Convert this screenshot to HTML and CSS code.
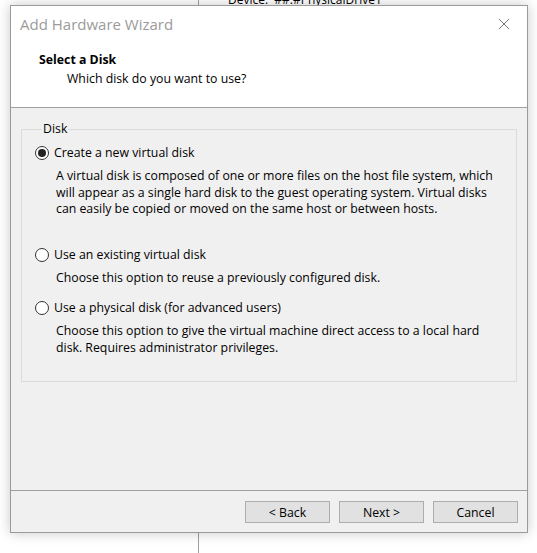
FILE: index.html
```html
<!DOCTYPE html>
<html lang="en">
<head>
    <meta charset="UTF-8">
    <title>Add Hardware Wizard</title>
    <link rel="stylesheet" href="styles.css">
</head>
<body>
    <div id="desktop">
        <div class="behind">
            <div class="behind-rule"></div>
            <div class="behind-text">Device:&nbsp; ##.#PhysicalDrive1</div>
        </div>

        <div id="wizard">
            <div class="titlebar">
                <span class="title">Add Hardware Wizard</span>
                <svg class="close" width="12" height="12" viewBox="0 0 12 12">
                    <path d="M1,1 L11,11 M11,1 L1,11" stroke="#777" stroke-width="1" fill="none" />
                </svg>
            </div>

            <div class="header">
                <div class="header-title">Select a Disk</div>
                <div class="header-sub">Which disk do you want to use?</div>
            </div>

            <div class="content">
                <fieldset class="group">
                    <legend>Disk</legend>

                    <div class="option first">
                        <div class="option-label">
                            <span class="radio checked"></span>
                            Create a new virtual disk
                        </div>
                        <p class="option-desc">A virtual disk is composed of one or more files on the host file system, which will appear as a single hard disk to the guest operating system. Virtual disks can easily be copied or moved on the same host or between hosts.</p>
                    </div>

                    <div class="option second">
                        <div class="option-label">
                            <span class="radio"></span>
                            Use an existing virtual disk
                        </div>
                        <p class="option-desc">Choose this option to reuse a previously configured disk.</p>
                    </div>

                    <div class="option third">
                        <div class="option-label">
                            <span class="radio"></span>
                            Use a physical disk (for advanced users)
                        </div>
                        <p class="option-desc">Choose this option to give the virtual machine direct access to a local hard disk. Requires administrator privileges.</p>
                    </div>
                </fieldset>
            </div>

            <div class="footer">
                <button class="btn">&lt; Back</button>
                <button class="btn">Next &gt;</button>
                <button class="btn">Cancel</button>
            </div>
        </div>
    </div>
</body>
</html>
```

FILE: styles.css
```css
body {
    margin: 0;
    background-color: #fff;
    font-family: "Segoe UI", "Open Sans", "Liberation Sans", Arial, sans-serif;
    font-size: 12.3px;
    color: #000;
}
#desktop {
    position: relative;
    width: 537px;
    height: 553px;
    overflow: hidden;
}
.behind {
    height: 553px;
}
.behind-rule {
    position: absolute;
    left: 198px;
    top: 0;
    width: 1px;
    height: 553px;
    background-color: #a0a0a0;
}
.behind-text {
    position: absolute;
    left: 228px;
    top: -8px;
    font-size: 12px;
    line-height: 16px;
    color: #000;
}
#wizard {
    position: absolute;
    left: 10px;
    top: 5px;
    width: 516px;
    height: 526px;
    display: flex;
    flex-direction: column;
    background-color: #f0f0f0;
    border: 1px solid #9a9a9a;
    box-shadow: 0 0 12px rgba(0, 0, 0, 0.22);
}
.titlebar {
    height: 36px;
    flex-shrink: 0;
    display: flex;
    align-items: center;
    justify-content: space-between;
    padding: 0 17px 0 9px;
    background-color: #fff;
}
.title {
    font-size: 15px;
    color: #9b9b9b;
}
.header {
    height: 66px;
    flex-shrink: 0;
    padding: 10px 0 0 28px;
    box-sizing: border-box;
    background-color: #fff;
    border-bottom: 1px solid #a0a0a0;
}
.header-title {
    font-weight: bold;
    line-height: 16px;
}
.header-sub {
    margin-top: 3px;
    padding-left: 28px;
    line-height: 16px;
}
.content {
    flex: 1;
    padding: 13px 10px 0 10px;
}
.group {
    margin: 0;
    height: 261px;
    box-sizing: border-box;
    padding: 8px 13px 0 13px;
    border: 1px solid #dcdcdc;
}
.group legend {
    padding: 0 1px;
    margin-left: 7px;
    line-height: 16px;
}
.option-label {
    display: flex;
    align-items: center;
    line-height: 16px;
}
.radio {
    width: 12px;
    height: 12px;
    border: 1px solid #333;
    border-radius: 50%;
    background-color: #fff;
    margin-right: 5px;
    position: relative;
}
.radio.checked::after {
    content: "";
    position: absolute;
    left: 2px;
    top: 2px;
    width: 8px;
    height: 8px;
    border-radius: 50%;
    background-color: #222;
}
.option-desc {
    margin: 7px 0 0 21px;
    line-height: 16.5px;
    width: 442px;
}
.option.second {
    margin-top: 29px;
}
.option.third {
    margin-top: 14px;
}
.footer {
    height: 42px;
    flex-shrink: 0;
    border-top: 1px solid #a0a0a0;
    display: flex;
    justify-content: flex-end;
    align-items: flex-start;
    gap: 9px;
    padding: 10px 9px 0 0;
    box-sizing: border-box;
}
.btn {
    width: 85px;
    height: 22px;
    font-family: inherit;
    font-size: 12.3px;
    background-color: #e1e1e1;
    border: 1px solid #adadad;
    padding: 0;
    color: #000;
}
```
